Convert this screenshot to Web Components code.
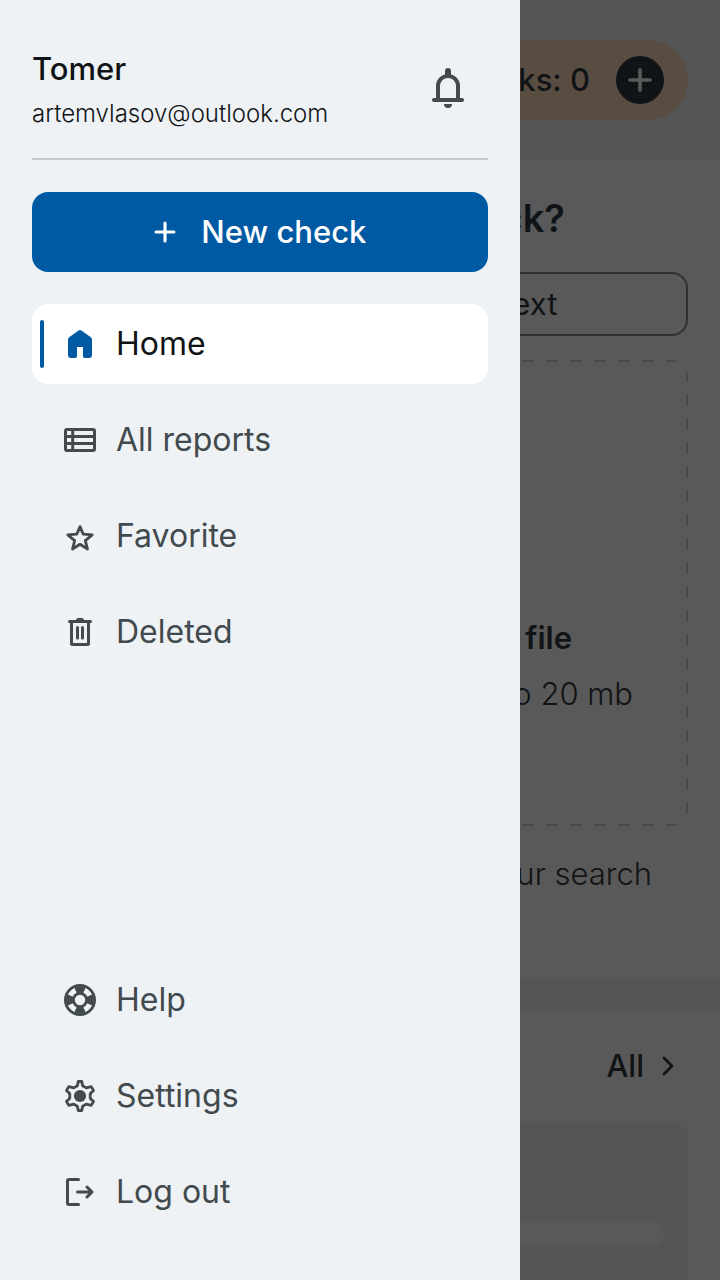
<!DOCTYPE html>
<html lang="en">
<head>
<meta charset="utf-8">
<meta name="viewport" content="width=device-width, initial-scale=1">
<title>Home</title>
<style>
  :root {
    --color-surface: #eef2f5;
    --color-primary: #0059a3;
    --color-text: #111416;
    --color-text-muted: #424a4d;
    --color-border: #c3cbcf;
    --dim-page: #595959;
    --dim-surface: #535556;
    --dim-accent: #594d42;
    --dim-line: #434d50;
    --radius: 16px;
  }

  body {
    margin: 0;
    font-family: Inter, "Noto Sans", sans-serif;
    font-size: 31px;
    line-height: 40px;
    color: var(--color-text);
  }
</style>
</head>
<body>
<app-shell>
  <check-page></check-page>
  <side-drawer slot="drawer" name="Tomer" email="artemvlasov@outlook.com">
    <nav-item icon="home" href="#home" active>Home</nav-item>
    <nav-item icon="reports" href="#reports">All reports</nav-item>
    <nav-item icon="star" href="#favorite">Favorite</nav-item>
    <nav-item icon="trash" href="#deleted">Deleted</nav-item>
    <nav-item slot="footer" icon="help" href="#help">Help</nav-item>
    <nav-item slot="footer" icon="settings" href="#settings">Settings</nav-item>
    <nav-item slot="footer" icon="logout" href="#logout">Log out</nav-item>
  </side-drawer>
</app-shell>

<script>
const icons = {
  bell: `<path d="M10 31V18a10 10 0 0 1 20 0v13" fill="none" stroke="currentColor" stroke-width="4"/>
    <path d="M6 32h28" stroke="currentColor" stroke-width="4" stroke-linecap="round"/>
    <path d="M17 9V3a3 3 0 0 1 6 0v6z" fill="currentColor"/>
    <path d="M16 36h8a4 4 0 0 1-8 0z" fill="currentColor"/>`,
  plus: `<path d="M16 5.8v20.4M5.8 16h20.4" stroke="currentColor" stroke-width="3.6" stroke-linecap="round"/>`,
  home: `<path d="M4 11.6c0-1 .4-1.7 1.200-2.300l9-6.600c1.100-.8 2.500-.8 3.600 0l9 6.600c.8.6 1.200 1.300 1.200 2.300V27a3 3 0 0 1-3 3h-4.300c-1 0-1.700-.7-1.700-1.700V19h-6v9.300c0 1-.7 1.700-1.700 1.700H7a3 3 0 0 1-3-3z" fill="currentColor"/>`,
  reports: `<g fill="none" stroke="currentColor" stroke-width="3"><rect x="1.5" y="5.5" width="29" height="21" rx="1.5"/><path d="M1 12.600h30M1 19.400h30M8.700 5v22"/></g>`,
  star: `<path d="M16 6.600L19.200 14.200 28.200 14.900 21.300 20.600 23.500 29 16 24.300 8.500 29 10.700 20.600 3.800 14.900 12.800 14.200z" fill="none" stroke="currentColor" stroke-width="2.8" stroke-linejoin="round"/>`,
  trash: `<g fill="none" stroke="currentColor" stroke-width="3"><path d="M5.500 5.500h21" stroke-linecap="round"/><path d="M7.500 5.500v22a1 1 0 0 0 1 1h15a1 1 0 0 0 1-1v-22"/><path d="M13.500 11.500v10.500M18.500 11.500v10.500" stroke-linecap="round"/></g><path d="M12 5V3.500L13.500 2h5L20 3.500V5z" fill="currentColor"/>`,
  help: `<circle cx="16" cy="16" r="14.6" fill="none" stroke="currentColor" stroke-width="2.8"/>
    <circle cx="16" cy="16" r="6.6" fill="none" stroke="currentColor" stroke-width="2.8"/>
    <circle cx="16" cy="16" r="10.5" fill="none" stroke="currentColor" stroke-width="6.5" pathLength="80" stroke-dasharray="11 9" stroke-dashoffset="5.5"/>`,
  settings: `<path d="M14.200 1.500L17.800 1.500 18.600 5.800 22.200 7.900 27.200 6.600 29.500 10.400 26.200 13.800 26.200 18.200 29.500 21.600 27.200 25.400 22.200 24.100 18.600 26.200 17.800 30.500 14.200 30.500 13.400 26.200 9.800 24.100 4.800 25.400 2.500 21.600 5.800 18.200 5.800 13.800 2.500 10.400 4.800 6.600 9.800 7.900 13.400 5.800z" fill="none" stroke="currentColor" stroke-width="2.8" stroke-linejoin="round"/><circle cx="16" cy="16" r="6.1" fill="currentColor"/>`,
  logout: `<g fill="none" stroke="currentColor" stroke-width="3" stroke-linecap="round" stroke-linejoin="round"><path d="M14.500 3.500H5a1.500 1.500 0 0 0-1.500 1.500v22A1.500 1.500 0 0 0 5 28.500h9.500M13.500 16h14M23 11l5 5-5 5"/></g>`,
  chevron: `<path d="M12 8l8 8-8 8" fill="none" stroke="currentColor" stroke-width="2.8" stroke-linecap="round" stroke-linejoin="round"/>`,
};

class UiIcon extends HTMLElement {
  connectedCallback() {
    if (this.shadowRoot) return;
    const name = this.getAttribute('name');
    const box = name === 'bell' ? 40 : 32;
    this.attachShadow({ mode: 'open' });
    this.shadowRoot.innerHTML = `
      <style>
        :host { display: block; flex: none; width: 32px; height: 32px; }
        svg { display: block; width: 100%; height: 100%; }
      </style>
      <svg viewBox="0 0 ${box} ${box}" aria-hidden="true">${icons[name] || ''}</svg>
    `;
  }
}

const shellTemplate = document.createElement('template');
shellTemplate.innerHTML = `
  <style>
    :host {
      display: grid;
      min-height: 100vh;
    }

    /* the drawer lies over the dimmed page, in the same grid cell */
    slot::slotted(*) {
      grid-area: 1 / 1;
    }
  </style>
  <slot></slot>
  <slot name="drawer"></slot>
`;

class AppShell extends HTMLElement {
  connectedCallback() {
    this.attachShadow({ mode: 'open' });
    this.shadowRoot.appendChild(shellTemplate.content.cloneNode(true));
  }
}

const navTemplate = document.createElement('template');
navTemplate.innerHTML = `
  <style>
    :host {
      display: block;
      font-size: 32px;
      color: var(--color-text-muted);
    }

    a {
      display: flex;
      align-items: center;
      gap: 20px;
      position: relative;
      padding: 19px 32px;
      border-radius: var(--radius);
      color: inherit;
      line-height: 42px;
      text-decoration: none;
    }

    :host([active]) a {
      background: #fff;
      color: var(--color-text);
    }

    :host([active]) ui-icon {
      color: var(--color-primary);
    }

    :host([active]) a::before {
      content: "";
      position: absolute;
      inset: 16px auto 16px 8px;
      width: 4px;
      border-radius: 2px;
      background: var(--color-primary);
    }
  </style>
  <a><ui-icon></ui-icon><span><slot></slot></span></a>
`;

class NavItem extends HTMLElement {
  connectedCallback() {
    this.attachShadow({ mode: 'open' });
    const view = navTemplate.content.cloneNode(true);
    view.querySelector('ui-icon').setAttribute('name', this.getAttribute('icon'));
    const link = view.querySelector('a');
    link.href = this.getAttribute('href') || '#';
    if (this.hasAttribute('active')) link.setAttribute('aria-current', 'page');
    this.shadowRoot.appendChild(view);
  }
}

const drawerTemplate = document.createElement('template');
drawerTemplate.innerHTML = `
  <style>
    :host {
      display: flex;
      flex-direction: column;
      box-sizing: border-box;
      width: 72.2%;
      padding: 48px 32px;
      background: var(--color-surface);
      z-index: 1;
    }

    header {
      display: flex;
      align-items: center;
      justify-content: space-between;
      padding-bottom: 28px;
      border-bottom: 2px solid var(--color-border);
    }

    .name {
      font-weight: 500;
      line-height: 42px;
    }

    .email {
      margin-top: 8px;
      font-size: 24px;
      font-weight: 300;
      line-height: 32px;
    }

    button {
      font: inherit;
      border: 0;
      cursor: pointer;
    }

    .bell {
      align-self: flex-start;
      padding: 20px;
      background: none;
      color: var(--color-text-muted);
    }

    .bell ui-icon {
      width: 40px;
      height: 40px;
    }

    .new {
      display: flex;
      align-items: center;
      justify-content: center;
      gap: 22px;
      margin: 32px 0;
      padding: 20px 22px 20px 20px;
      border-radius: var(--radius);
      background: var(--color-primary);
      color: #fff;
      font-weight: 500;
    }

    .new ui-icon {
      width: 28px;
      height: 28px;
    }

    nav {
      display: flex;
      flex-direction: column;
      gap: 16px;
    }

    .footer {
      margin-top: auto;
    }
  </style>
  <header>
    <div>
      <div class="name"></div>
      <div class="email"></div>
    </div>
    <button class="bell" type="button" aria-label="Notifications"><ui-icon name="bell"></ui-icon></button>
  </header>
  <button class="new" type="button"><ui-icon name="plus"></ui-icon><span>New check</span></button>
  <nav aria-label="Main"><slot></slot></nav>
  <nav class="footer" aria-label="Account"><slot name="footer"></slot></nav>
`;

class SideDrawer extends HTMLElement {
  connectedCallback() {
    this.attachShadow({ mode: 'open' });
    this.shadowRoot.appendChild(drawerTemplate.content.cloneNode(true));
    this.shadowRoot.querySelector('.name').textContent = this.getAttribute('name') || '';
    this.shadowRoot.querySelector('.email').textContent = this.getAttribute('email') || '';
  }
}

const pageTemplate = document.createElement('template');
pageTemplate.innerHTML = `
  <style>
    :host {
      display: flex;
      flex-direction: column;
      background: var(--dim-page);
      text-align: right;
    }

    button {
      font: inherit;
      color: inherit;
      border: 0;
      background: none;
    }

    h1, h2, p {
      margin: 0;
    }

    header {
      display: flex;
      justify-content: flex-end;
      padding: 40px 32px;
      background: var(--dim-surface);
    }

    .balance {
      display: flex;
      align-items: center;
      gap: 26px;
      padding: 16px 24px 16px 40px;
      border-radius: 40px;
      background: var(--dim-accent);
      font-weight: 500;
    }

    .add {
      padding: 8px;
      border-radius: 50%;
      background: var(--color-text);
      color: var(--dim-page);
    }

    .start {
      padding: 32px 32px 84px;
    }

    h1 {
      padding-right: 123px;
      font-size: 38px;
      font-weight: 600;
      line-height: 52px;
    }

    .tabs {
      display: grid;
      grid-template-columns: 1fr 1fr;
      gap: 8px;
      margin: 28px 0 24px;
    }

    .tabs button {
      grid-column: 2;
      padding: 10px;
      border: 2px solid #2c3236;
      border-radius: var(--radius);
    }

    .drop {
      display: flex;
      flex-direction: column;
      justify-content: flex-end;
      gap: 16px;
      box-sizing: border-box;
      min-height: 466px;
      padding: 0 55px 112px 0;
      border-radius: var(--radius);
      --dashes: transparent 0 10px, var(--dim-line) 10px 22px, transparent 22px 24px;
      background:
        repeating-linear-gradient(to left, var(--dashes)) top / 100% 2px no-repeat,
        repeating-linear-gradient(to left, var(--dashes)) bottom / 100% 2px no-repeat,
        repeating-linear-gradient(to bottom, var(--dashes)) left / 2px 100% no-repeat,
        repeating-linear-gradient(to bottom, var(--dashes)) right / 2px 100% no-repeat;
    }

    .drop h2 {
      padding-right: 61px;
      font-size: 31px;
      font-weight: 600;
    }

    .light {
      font-weight: 300;
    }

    .hint {
      margin: 28px 36px 0 0;
    }

    .recent {
      flex: 1;
      display: flex;
      flex-direction: column;
      padding: 36px 32px 0;
      border-top: 32px solid var(--dim-surface);
    }

    .recent a {
      display: flex;
      align-items: center;
      align-self: flex-end;
      gap: 8px;
      margin-bottom: 36px;
      padding-right: 4px;
      color: inherit;
      font-weight: 500;
      text-decoration: none;
    }

    .card {
      flex: 1;
      padding: 100px 24px 0;
      border-radius: var(--radius) var(--radius) 0 0;
      background: var(--dim-surface);
    }

    .bar {
      height: 24px;
      border-radius: 12px;
      background: var(--dim-page);
    }
  </style>
  <header>
    <div class="balance">
      <span>Checks: 0</span>
      <button class="add" type="button" aria-label="Add checks"><ui-icon name="plus"></ui-icon></button>
    </div>
  </header>
  <section class="start">
    <h1>check?</h1>
    <div class="tabs"><button type="button">Text</button></div>
    <div class="drop">
      <h2>file</h2>
      <p class="light">to 20 mb</p>
    </div>
    <p class="hint light">your search</p>
  </section>
  <section class="recent">
    <a href="#reports">All<ui-icon name="chevron"></ui-icon></a>
    <div class="card"><div class="bar"></div></div>
  </section>
`;

class CheckPage extends HTMLElement {
  connectedCallback() {
    this.attachShadow({ mode: 'open' });
    this.shadowRoot.appendChild(pageTemplate.content.cloneNode(true));
  }
}

customElements.define('ui-icon', UiIcon);
customElements.define('app-shell', AppShell);
customElements.define('nav-item', NavItem);
customElements.define('side-drawer', SideDrawer);
customElements.define('check-page', CheckPage);
</script>
</body>
</html>
